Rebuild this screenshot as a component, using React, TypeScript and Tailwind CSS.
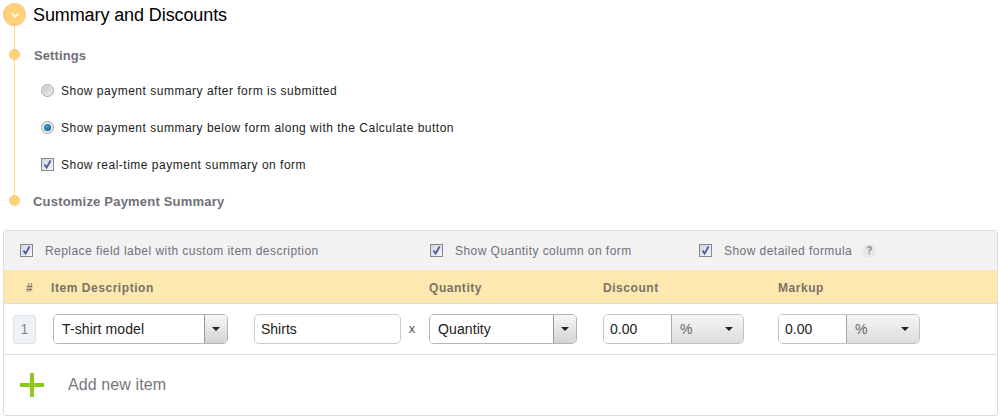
const Check = () => (
  <span className="w-[13px] h-[13px] border border-[#858893] bg-[linear-gradient(135deg,#cfd4e0,#f6f7fa)] flex items-center justify-center shrink-0">
    <svg width="11" height="11" viewBox="0 0 11 11" fill="none">
      <path d="M2.5 5.5 L4.6 8.6 L8.6 1.5" stroke="#4a5a9c" strokeWidth="1.8" />
    </svg>
  </span>
)

const Radio = ({ on }: { on?: boolean }) => (
  <span className="w-[13px] h-[13px] rounded-full border border-[#a5a5a5] bg-[#e6e8ea] flex items-center justify-center shrink-0">
    {on ? (
      <span className="w-[7px] h-[7px] rounded-full bg-[radial-gradient(circle_at_40%_35%,#3fa6d8,#0b4a70)]" />
    ) : (
      <span className="w-[9px] h-[9px] rounded-full bg-[linear-gradient(135deg,#c4c4c4,#ececec)]" />
    )}
  </span>
)

const Caret = () => <span className="w-0 h-0 border-x-[4px] border-x-transparent border-t-[4px] border-t-[#222]" />

const Select = ({ label, width }: { label: string; width: string }) => (
  <div className={`${width} h-[30px] flex border border-[#b5b5b5] rounded-[5px] overflow-hidden`}>
    <span className="flex-1 bg-white pl-[8px] text-[14px] tracking-[0.1px] leading-[28px] text-[#222]">{label}</span>
    <span className="w-[23px] border-l border-[#999] bg-[linear-gradient(#f6f6f6,#d4d4d4)] flex items-center justify-center">
      <Caret />
    </span>
  </div>
)

const Amount = ({ width }: { width: string }) => (
  <div className={`${width} h-[30px] flex border border-[#c4c4c4] rounded-[5px] overflow-hidden`}>
    <span className="w-[67px] bg-white pl-[6px] text-[14px] leading-[28px] text-[#222]">0.00</span>
    <span className="flex-1 border-l border-[#aaa] bg-[linear-gradient(#f6f6f6,#dcdcdc)] flex items-center justify-between pl-[8px] pr-[10px] text-[14px] text-[#666]">
      %
      <Caret />
    </span>
  </div>
)

export default function App() {
  return (
    <div className="w-[1000px] h-[418px] bg-white overflow-hidden font-['Liberation_Sans',Arial,sans-serif]">
      <div className="relative h-[220px]">
        {/* Timeline */}
        <div className="absolute left-[14px] top-[20px] h-[178px] w-[1px] bg-[#ffd97f]" />
        <div className="absolute left-[3px] top-[3px] w-[23px] h-[23px] rounded-full border-2 border-[#ffcb8b] bg-[#ffd27a] flex items-center justify-center">
          <svg width="8" height="6" viewBox="0 0 8 6" fill="none">
            <path d="M1 1.5 L4 4.5 L7 1.5" stroke="#fff" strokeWidth="1.6" />
          </svg>
        </div>
        <div className="absolute left-[9px] top-[49px] w-[11px] h-[11px] rounded-full bg-[#ffd27a] border border-[#ffc477]" />
        <div className="absolute left-[9px] top-[195px] w-[11px] h-[11px] rounded-full bg-[#ffd27a] border border-[#ffc477]" />

        <div className="h-[30px] pl-[33px] flex items-center text-[18px] tracking-[-0.1px] text-black">Summary and Discounts</div>
        <div className="h-[28px] mt-[12px] pl-[34px] flex items-center text-[13px] tracking-[0.1px] font-bold text-[#70707a]">Settings</div>
        <div className="mt-[2px] text-[12px] tracking-[0.5px] text-[#222]">
          <div className="h-[37px] pl-[41px] flex items-center gap-[7px]">
            <Radio />
            Show payment summary after form is submitted
          </div>
          <div className="h-[37px] pl-[41px] flex items-center gap-[7px]">
            <Radio on />
            Show payment summary below form along with the Calculate button
          </div>
          <div className="h-[37px] pl-[41px] flex items-center gap-[7px]">
            <Check />
            Show real-time payment summary on form
          </div>
        </div>
        <div className="h-[37px] pl-[33px] flex items-center text-[13px] tracking-[0.2px] font-bold text-[#70707a]">Customize Payment Summary</div>
      </div>

      {/* Panel */}
      <div className="mt-[10px] ml-[3px] w-[995px] h-[186px] border border-[#ddd] rounded-[3px] overflow-hidden">
        <div className="h-[39px] bg-[#f2f2f2] flex items-center text-[12px] tracking-[0.45px] text-[#70707a]">
          <div className="w-[426px] pl-[16px] flex items-center gap-[12px]">
            <Check />
            Replace field label with custom item description
          </div>
          <div className="w-[269px] flex items-center gap-[12px]">
            <Check />
            Show Quantity column on form
          </div>
          <div className="flex items-center gap-[12px]">
            <Check />
            <span className="flex items-center gap-[10px]">
              Show detailed formula
              <span className="w-[14px] h-[14px] rounded-full bg-[#e8e8e8] text-[10px] tracking-normal font-bold text-[#888] text-center leading-[14px]">?</span>
            </span>
          </div>
        </div>
        <div className="h-[34px] pt-[2px] bg-[#fde9b0] border-b border-[#ddd] flex items-center text-[12px] tracking-[0.55px] font-bold text-[#7a7266]">
          <span className="w-[47px] pl-[22px]">#</span>
          <span className="w-[378px]">Item Description</span>
          <span className="w-[174px]">Quantity</span>
          <span className="w-[175px]">Discount</span>
          <span>Markup</span>
        </div>
        <div className="h-[51px] border-b border-[#ddd] flex items-center">
          <span className="ml-[9px] w-[23px] h-[29px] bg-[#eef1f5] border border-[#dde1e8] rounded-[3px] text-center text-[14px] leading-[27px] text-[#888]">1</span>
          <div className="ml-[17px]">
            <Select label="T-shirt model" width="w-[175px]" />
          </div>
          <div className="ml-[26px] w-[147px] h-[30px] border border-[#ccc] rounded-[5px] pl-[6px] text-[14px] leading-[28px] text-[#222]">Shirts</div>
          <span className="w-[22px] mr-[6px] text-center text-[13px] text-[#555]">x</span>
          <Select label="Quantity" width="w-[148px]" />
          <div className="ml-[26px]">
            <Amount width="w-[141px]" />
          </div>
          <div className="ml-[34px]">
            <Amount width="w-[142px]" />
          </div>
        </div>
        <div className="h-[59px] pt-[1px] flex items-center">
          <svg className="ml-[16px]" width="24" height="24" viewBox="0 0 24 24">
            <path d="M12 0 V24 M0 12 H24" stroke="#8ccb1e" strokeWidth="4" />
          </svg>
          <span className="ml-[24px] text-[16px] tracking-[0.1px] text-[#777]">Add new item</span>
        </div>
      </div>
    </div>
  )
}
